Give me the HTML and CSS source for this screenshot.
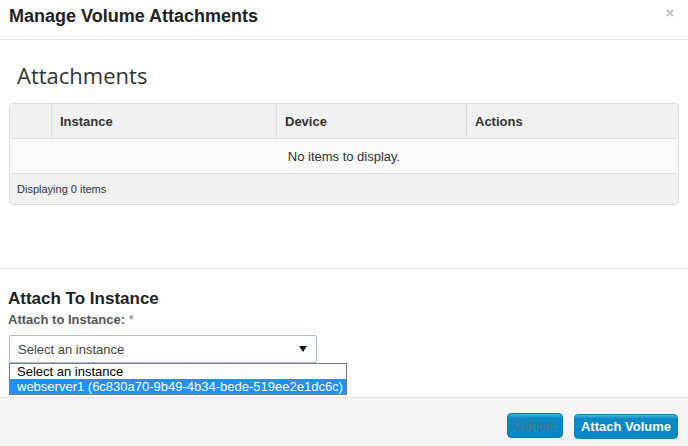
FILE: index.html
```html
<!DOCTYPE html>
<html>
<head>
<meta charset="utf-8">
<link rel="stylesheet" href="styles.css">
</head>
<body>
<div class="modal">
  <div class="modal-header">
    <h2 class="title">Manage Volume Attachments</h2>
    <svg class="close" width="8" height="8" viewBox="0 0 8 8"><path d="M1 1L7 7M7 1L1 7" stroke="#c4c4c4" stroke-width="2"/></svg>
  </div>
  <div class="attachments">
    <h3 class="heading">Attachments</h3>
    <div class="table-wrap">
      <table class="table">
        <thead>
          <tr><th class="c1"></th><th class="c2">Instance</th><th class="c3">Device</th><th class="c4">Actions</th></tr>
        </thead>
        <tbody>
          <tr><td class="empty" colspan="4">No items to display.</td></tr>
        </tbody>
        <tfoot>
          <tr><td class="foot" colspan="4">Displaying 0 items</td></tr>
        </tfoot>
      </table>
    </div>
  </div>
  <div class="attach">
    <h3 class="form-title">Attach To Instance</h3>
    <div class="label">Attach to Instance: <span class="req">*</span></div>
    <div class="select-wrap">
      <div class="select">
        <span>Select an instance</span>
        <svg class="arrow" width="8" height="6" viewBox="0 0 8 6"><path d="M0 0H8L4 6Z" fill="#111"/></svg>
      </div>
      <div class="options">
        <div class="opt">Select an instance</div>
        <div class="opt selected">webserver1 (6c830a70-9b49-4b34-bede-519ee2e1dc6c)</div>
      </div>
    </div>
  </div>
  <div class="modal-footer">
    <button class="btn cancel">Cancel</button>
    <button class="btn primary">Attach Volume</button>
  </div>
</div>
</body>
</html>
```

FILE: styles.css
```css
html, body {
  margin: 0;
  padding: 0;
  background: #fff;
  font-family: "Liberation Sans", Arial, sans-serif;
  color: #333;
}
.modal {
  width: 688px;
  height: 446px;
  display: flex;
  flex-direction: column;
  overflow: hidden;
}
.modal-header {
  height: 39px;
  border-bottom: 1px solid #e5e5e5;
  padding: 0 9px;
  display: flex;
  align-items: center;
  justify-content: space-between;
  box-sizing: content-box;
}
.title {
  margin: 0;
  font-size: 18px;
  font-weight: bold;
  color: #222;
  line-height: 20px;
  margin-top: -8px;
}
.close {
  margin-right: 5px;
  margin-top: -14px;
}
.attachments {
  height: 228px;
  border-bottom: 1px solid #e5e5e5;
  padding: 0 9px;
}
.heading {
  margin: 0;
  padding-left: 8px;
  font-family: "Open Sans", sans-serif;
  font-weight: 400;
  font-size: 22px;
  line-height: 30px;
  height: 63px;
  padding-top: 20px;
  box-sizing: border-box;
  color: #333;
}
.table-wrap {
  border: 1px solid #ddd;
  border-radius: 4px;
  overflow: hidden;
}
.table {
  width: 100%;
  border-collapse: collapse;
  font-size: 13px;
}
.table th {
  background: #f1f1f1;
  height: 34px;
  text-align: left;
  font-weight: bold;
  padding: 0 8px;
  border-bottom: 1px solid #ddd;
  color: #333;
}
.table th + th {
  border-left: 1px solid #ddd;
}
.c1 { width: 25px; }
.c2 { width: 208px; }
.c3 { width: 173px; }
.empty {
  background: #f9f9f9;
  height: 34px;
  text-align: center;
  border-bottom: 1px solid #ddd;
  padding: 0;
}
.foot {
  background: #f1f1f1;
  height: 30px;
  font-size: 11px;
  padding: 0 7px;
}
.attach {
  flex: 1;
  padding: 20px 8px 0;
}
.form-title {
  margin: 0;
  font-size: 17px;
  font-weight: bold;
  line-height: 20px;
  color: #222;
}
.label {
  font-size: 13px;
  font-weight: bold;
  color: #555;
  line-height: 16px;
  margin-top: 3px;
}
.req { color: #777; font-weight: normal; }
.select-wrap {
  position: relative;
  margin-top: 7px;
  margin-left: 1px;
}
.select {
  width: 308px;
  height: 28px;
  box-sizing: border-box;
  border: 1px solid #9fbde6;
  border-radius: 2px;
  padding: 0 8px;
  display: flex;
  align-items: center;
  justify-content: space-between;
  font-size: 13px;
  color: #444;
  background: #fff;
}
.arrow { margin-right: 1px; }
.options {
  position: absolute;
  left: 0;
  top: 28px;
  width: 336px;
  border: 1px solid #7a7a7a;
  background: #fff;
  font-size: 13px;
  z-index: 2;
}
.opt {
  height: 15px;
  line-height: 15px;
  padding: 0 7px;
  color: #000;
  white-space: nowrap;
}
.opt.selected {
  background: #1e90ff;
  color: #fff;
}
.modal-footer {
  height: 49px;
  border-top: 1px solid #e5e5e5;
  background: #f4f4f4;
  display: flex;
  justify-content: flex-end;
  align-items: flex-start;
  padding: 15px 10px 0 0;
  box-sizing: border-box;
  gap: 11px;
}
.btn {
  font-family: "Liberation Sans", Arial, sans-serif;
  font-size: 13px;
  height: 25px;
  border: 1px solid #0a7fba;
  border-radius: 4px;
  background: linear-gradient(#4ab0de 0, #0a8ac4 4px, #0088c6 100%);
  padding: 0;
  white-space: nowrap;
  text-align: center;
}
.cancel {
  width: 56px;
  color: #5f6d76;
}
.primary {
  width: 104px;
  color: #fff;
  font-weight: bold;
  margin-top: 1px;
}
```
